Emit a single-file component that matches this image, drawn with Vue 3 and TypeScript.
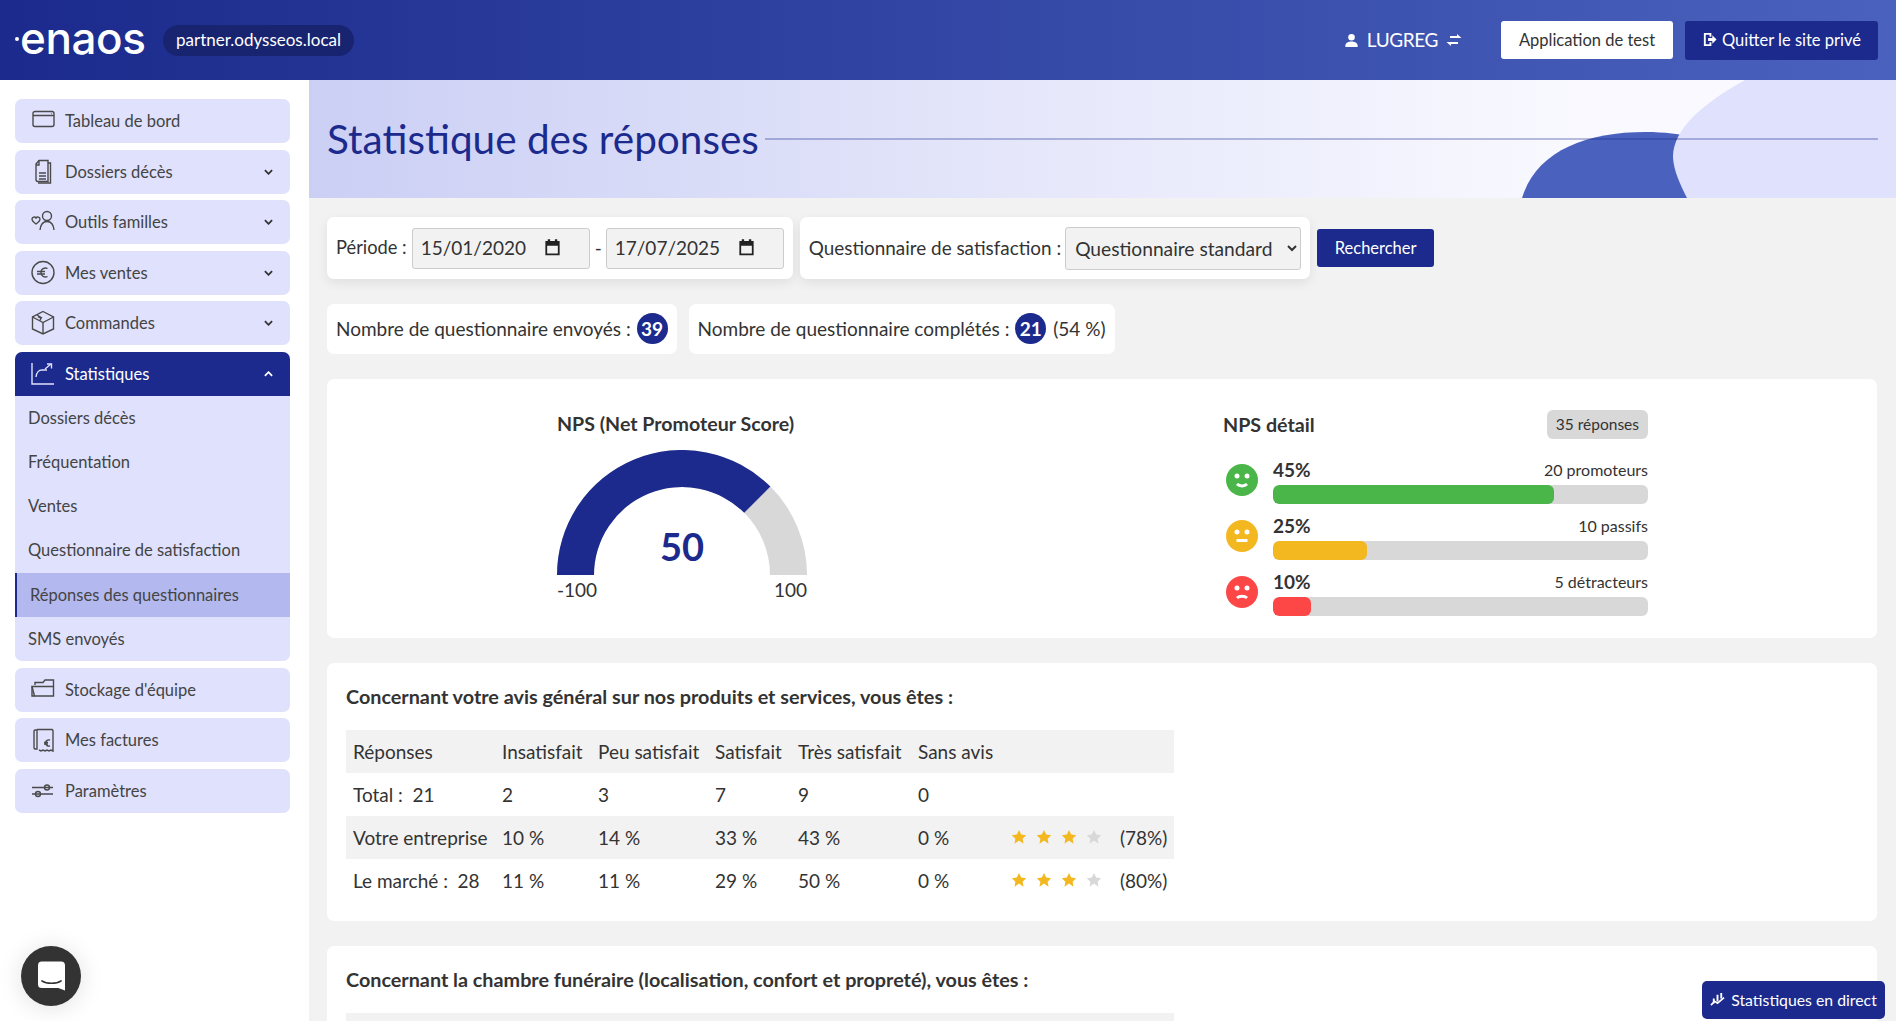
<script setup lang="ts">
interface NavItem { label: string; icon: string[]; caret?: boolean; open?: boolean; sub?: { label: string; active?: boolean }[] }

const nav: NavItem[] = [
  { label: 'Tableau de bord', icon: ['M3 5.5a2 2 0 0 1 2-2h17a2 2 0 0 1 2 2v11a2 2 0 0 1-2 2H5a2 2 0 0 1-2-2z', 'M3 7.5h21', 'M21 5.5h.5'] },
  { label: 'Dossiers décès', caret: true, icon: ['M9 1.5h9v21H8a2 2 0 0 1-2-2V5z', 'M9 1.5V6H6', 'M18 4h2.500v20H8', 'M9 14h7', 'M9 17h7', 'M9 20h7'] },
  { label: 'Outils familles', caret: true, icon: ['M6 15c-2.500-1.800-4-3-4-5a2.200 2.200 0 0 1 4-1 2.200 2.200 0 0 1 4 1c0 2-1.500 3.200-4 5z', 'M17 11.500a4.500 4.500 0 1 0 0-9 4.500 4.500 0 0 0 0 9z', 'M10 21c.6-5 3-8.500 7-8.500s6.500 3.500 7 8.500'] },
  { label: 'Mes ventes', caret: true, icon: ['M13 1.500a11 11 0 1 1 0 22 11 11 0 0 1 0-22z', 'M17.500 8.500a4.500 4.500 0 1 0 0 8', 'M7 11.500h8', 'M7 14h8'] },
  { label: 'Commandes', caret: true, icon: ['M13 1.500l10.500 5.500v12L13 24 2.500 19V7z', 'M2.500 7L13 12.500 23.500 7', 'M13 12.500V24', 'M7 5l5 3', 'M8 6.500l3 1.500-1 2.500'] },
  { label: 'Statistiques', open: true, icon: ['M2 2v21h22', 'M6 16c1-6 3-7 6-7h5', 'M15 8l6-5', 'M17 3h4.500v4.500'], sub: [
    { label: 'Dossiers décès' }, { label: 'Fréquentation' }, { label: 'Ventes' },
    { label: 'Questionnaire de satisfaction' }, { label: 'Réponses des questionnaires', active: true }, { label: 'SMS envoyés' },
  ] },
  { label: "Stockage d'équipe", icon: ['M5 8V5.500h8L15 3h8.500v16H4.500L2 9.500h21.500', 'M2 9.500V19h2.500'] },
  { label: 'Mes factures', icon: ['M5 3h2v19H5a1.500 1.500 0 0 1-1-1.500V4.500A1.500 1.500 0 0 1 5 3z', 'M7 2.500h15a1.500 1.500 0 0 1 1 1.500V24l-2-1-2 1-2-1-2 1-2-1-2 1-2-1', 'M20 13a3.500 3.500 0 0 0-4.500 3 3.500 3.500 0 0 0 4.500 3', 'M14 15.500h4', 'M14 17h4'] },
  { label: 'Paramètres', icon: ['M2 9.500h21', 'M2 16h21', 'M17 7a2.500 2.500 0 1 1 0 5 2.500 2.500 0 0 1 0-5z', 'M8 13.500a2.500 2.500 0 1 1 0 5 2.500 2.500 0 0 1 0-5z'] },
]

const details = [
  { pct: '45%', label: '20 promoteurs', width: 75, color: '#4ab548', mouth: 'M11 20c2.500 2.500 7.500 2.500 10 0' },
  { pct: '25%', label: '10 passifs', width: 25, color: '#f3b820', mouth: 'M10.500 20.500h11' },
  { pct: '10%', label: '5 détracteurs', width: 10, color: '#fd4747', mouth: 'M11 22c2.500-2.500 7.500-2.500 10 0' },
]

const headers = ['Réponses', 'Insatisfait', 'Peu satisfait', 'Satisfait', 'Très satisfait', 'Sans avis', '', '']
const rows = [
  { cells: ['Total :  21', '2', '3', '7', '9', '0'], score: '' },
  { cells: ['Votre entreprise', '10 %', '14 %', '33 %', '43 %', '0 %'], score: '(78%)' },
  { cells: ['Le marché :  28', '11 %', '11 %', '29 %', '50 %', '0 %'], score: '(80%)' },
]
const starPath = 'M8 1l2.200 4.600 5 .7-3.600 3.500.9 5L8 11.400 3.500 14.800l.9-5L.8 6.300l5-.7z'
</script>

<template>
  <div class="app">
    <header class="topbar">
      <div class="brand">
        <span class="logo">enaos</span>
        <span class="domain">partner.odysseos.local</span>
      </div>
      <div class="actions">
        <span class="user">
          <svg class="user-icon" viewBox="0 0 16 16" width="15" height="15"><circle cx="8" cy="4.500" r="3.500" fill="#fff" /><path d="M1.500 15v-2c0-2.500 3.500-4 6.500-4s6.500 1.500 6.500 4v2z" fill="#fff" /></svg>
          LUGREG
          <svg class="swap-icon" viewBox="0 0 16 12" width="16" height="12"><path d="M4 2h7V0l4.500 4H4z" fill="#fff" /><path d="M12 10H5v2L.5 8H12z" fill="#fff" /></svg>
        </span>
        <button class="btn-light">Application de test</button>
        <button class="btn-dark">
          <svg viewBox="0 0 16 16" width="15" height="15"><path d="M9 5V2H3v12h6v-3" fill="none" stroke="#fff" stroke-width="2" /><path d="M6.500 6.500H11V3.500L15.500 8 11 12.500v-3H6.500z" fill="#fff" /></svg>
          Quitter le site privé
        </button>
      </div>
    </header>

    <div class="layout">
      <aside class="sidebar">
        <div v-for="item in nav" :key="item.label" class="nav-group">
          <div class="nav-head" :class="{ open: item.open }">
            <svg class="nav-icon" viewBox="0 0 26 26" width="26" height="26">
              <path v-for="d in item.icon" :key="d" :d="d" />
            </svg>
            <span class="nav-label">{{ item.label }}</span>
            <svg v-if="item.caret || item.open" class="caret" viewBox="0 0 10 6" width="9" height="6">
              <path :d="item.open ? 'M1 5l4-4 4 4' : 'M1 1l4 4 4-4'" />
            </svg>
          </div>
          <div v-if="item.sub" class="nav-sub">
            <div v-for="s in item.sub" :key="s.label" class="sub-item" :class="{ active: s.active }">{{ s.label }}</div>
          </div>
        </div>
      </aside>

      <main class="main">
        <section class="hero">
          <svg class="hero-art" viewBox="0 0 374 118" width="374" height="118" aria-hidden="true">
            <path d="M0 118C14 72 62 52 124 52c18 0 34 2 50 6L210 118z" fill="#4a62bd" />
            <path d="M223 0C180 24 150 50 151 78c1 14 8 28 14 40H374V0z" fill="#dfe1fd" />
          </svg>
          <h1 class="title">Statistique des réponses</h1>
          <div class="title-line"></div>
        </section>

        <div class="content">
          <div class="filters">
            <div class="card filter-card">
              <span class="label period">Période :</span>
              <span class="date-field">15/01/2020
                <svg viewBox="0 0 16 16" width="19" height="19"><path d="M2 2.500h12v12H2z M3.500 6.500v6.500h9V6.500z" fill="#222" fill-rule="evenodd" /><path d="M4 1h2v3H4zM10 1h2v3h-2z" fill="#222" /></svg>
              </span>
              <span class="label dash">-</span>
              <span class="date-field">17/07/2025
                <svg viewBox="0 0 16 16" width="19" height="19"><path d="M2 2.500h12v12H2z M3.500 6.500v6.500h9V6.500z" fill="#222" fill-rule="evenodd" /><path d="M4 1h2v3H4zM10 1h2v3h-2z" fill="#222" /></svg>
              </span>
            </div>
            <div class="card filter-card survey">
              <span class="label">Questionnaire de satisfaction :</span>
              <select class="survey-select"><option>Questionnaire standard</option></select>
            </div>
            <button class="btn-search">Rechercher</button>
          </div>

          <div class="counters">
            <div class="card counter">Nombre de questionnaire envoyés : <b class="num">39</b></div>
            <div class="card counter">Nombre de questionnaire complétés : <b class="num">21</b> <span class="pct">(54 %)</span></div>
          </div>

          <section class="card nps">
            <div class="gauge">
              <h3 class="gauge-title">NPS (Net Promoteur Score)</h3>
              <svg class="gauge-svg" viewBox="0 0 250 125" width="250" height="125">
                <path d="M0 125A125 125 0 0 1 250 125H213A88 88 0 0 0 37 125z" fill="#d8d8d8" />
                <path d="M0 125A125 125 0 0 1 213.400 36.600L187.200 62.800A88 88 0 0 0 37 125z" fill="#1b2a8c" />
              </svg>
              <div class="gauge-value">50</div>
              <div class="gauge-scale"><span>-100</span><span>100</span></div>
            </div>
            <div class="detail">
              <div class="detail-head">
                <h3>NPS détail</h3>
                <span class="badge">35 réponses</span>
              </div>
              <div v-for="d in details" :key="d.pct" class="detail-row">
                <svg class="face" viewBox="0 0 32 32" width="32" height="32">
                  <circle cx="16" cy="16" r="16" :fill="d.color" />
                  <circle cx="11" cy="12" r="2.500" fill="#fff" />
                  <circle cx="21" cy="12" r="2.500" fill="#fff" />
                  <path :d="d.mouth" fill="none" stroke="#fff" stroke-width="3" />
                </svg>
                <div class="detail-body">
                  <div class="detail-text"><b>{{ d.pct }}</b><span>{{ d.label }}</span></div>
                  <div class="track"><div class="fill" :style="{ width: d.width + '%', background: d.color }"></div></div>
                </div>
              </div>
            </div>
          </section>

          <section class="card question">
            <h3 class="question-title">Concernant votre avis général sur nos produits et services, vous êtes :</h3>
            <table class="stats">
              <colgroup>
                <col class="c1" /><col class="c2" /><col class="c3" /><col class="c4" /><col class="c5" /><col class="c6" /><col class="c7" /><col class="c8" />
              </colgroup>
              <tbody>
                <tr><td v-for="(h, i) in headers" :key="i">{{ h }}</td></tr>
                <tr v-for="r in rows" :key="r.cells[0]">
                  <td v-for="c in r.cells" :key="c">{{ c }}</td>
                  <td>
                    <span v-if="r.score" class="stars">
                      <svg v-for="n in 4" :key="n" viewBox="0 0 16 16" width="16" height="16"><path :d="starPath" :fill="n < 4 ? '#f3b820' : '#d8d8d8'" /></svg>
                    </span>
                  </td>
                  <td>{{ r.score }}</td>
                </tr>
              </tbody>
            </table>
          </section>

          <section class="card question">
            <h3 class="question-title">Concernant la chambre funéraire (localisation, confort et propreté), vous êtes :</h3>
            <div class="next-head"></div>
          </section>
        </div>
      </main>
    </div>

    <div class="chat">
      <svg viewBox="0 0 28 30" width="27" height="30"><path d="M4 0h20a4 4 0 0 1 4 4v26l-7-2.500H4a4 4 0 0 1-4-4V4a4 4 0 0 1 4-4z" fill="#fff" /><path d="M4 20c5 3.500 15 3.500 20 0" fill="none" stroke="#333" stroke-width="1.600" stroke-linecap="round" /></svg>
    </div>
    <button class="live">
      <svg viewBox="0 0 16 16" width="15" height="15"><path d="M3 7h2v5H3zM7 3h2v7H7zM11 1h2v6h-2z" fill="#fff" /><path d="M1 14l4-4 3 2 7-6" fill="none" stroke="#fff" stroke-width="1.800" /></svg>
      Statistiques en direct
    </button>
  </div>
</template>

<style>
html, body { margin: 0; height: 100%; overflow: hidden; }
</style>

<style scoped>
.app { height: 1021px; overflow: hidden; font-family: Lato, "Liberation Sans", sans-serif; color: #333; background: #fff; }
button { font-family: inherit; cursor: pointer; border: 0; }
h1, h3 { margin: 0; }

.topbar { height: 80px; display: flex; align-items: center; justify-content: space-between; padding: 0 18px 0 15px; background: linear-gradient(90deg, #1b2a8c, #4a62bd); color: #fff; }
.brand { display: flex; align-items: center; gap: 19px; }
.logo { position: relative; font-family: Inter, sans-serif; font-size: 44px; line-height: 40px; font-weight: 500; letter-spacing: -.4px; width: 129px; padding-left: 5px; box-sizing: border-box; margin-top: -4px; }
.logo::before { content: ""; position: absolute; left: 0; top: 19px; width: 4px; height: 4px; border-radius: 50%; background: #fff; }
.domain { background: #182470; border-radius: 16px; height: 31px; line-height: 29px; padding: 0 13px; font-size: 17px; }
.actions { display: flex; align-items: center; }
.user { display: flex; align-items: center; gap: 8px; font-size: 19px; letter-spacing: -.4px; margin-right: 39px; line-height: 22px; }
.btn-light { width: 172px; height: 38px; background: #fff; color: #333; border-radius: 3px; font-size: 16.5px; padding-bottom: 2px; }
.btn-dark { width: 193px; height: 39px; margin-left: 12px; background: #1b2a8c; color: #fff; border-radius: 3px; font-size: 16.5px; display: flex; align-items: center; justify-content: center; gap: 5px; padding-bottom: 2px; }

.layout { display: flex; height: 941px; }
.sidebar { width: 309px; flex: none; padding: 19px 19px 0 15px; box-sizing: border-box; display: flex; flex-direction: column; gap: 6.5px; }
.nav-group { background: #dfe1fd; border-radius: 7px; overflow: hidden; flex: none; }
.nav-head { height: 44px; display: flex; align-items: center; padding: 0 17px 0 15px; gap: 9px; font-size: 16.5px; color: #444; }
.nav-head.open { background: #1b2a8c; color: #fff; }
.nav-icon { flex: none; fill: none; stroke: #4a4a4a; stroke-width: 1.400; }
.nav-head.open .nav-icon { stroke: #dfe1fd; }
.nav-label { flex: 1; }
.caret { fill: none; stroke: #333; stroke-width: 2; }
.nav-head.open .caret { stroke: #fff; }
.sub-item { height: 44.330px; line-height: 44px; padding-left: 13px; font-size: 16.5px; color: #444; }
.sub-item.active { background: #b3b9ee; border-left: 2px solid #1b2a8c; padding-left: 13px; }

.main { flex: 1; min-width: 0; background: #f2f2f2; }
.hero { position: relative; height: 118px; display: flex; align-items: center; padding: 0 18px; overflow: hidden; background: linear-gradient(90deg, #cbcff4, #f9f9ff 80%); }
.hero-art { position: absolute; right: 0; bottom: 0; }
.title { position: relative; font-size: 40.5px; font-weight: 400; color: #1b2a8c; white-space: nowrap; margin: -2px 6px 0 0; }
.title-line { position: relative; flex: 1; height: 2px; background: rgba(27, 42, 140, .3); }

.content { padding: 19px 19px 0 18px; }
.card { background: #fff; border-radius: 7px; }
.filters { display: flex; align-items: center; gap: 7px; }
.filter-card { display: flex; align-items: center; height: 62px; padding: 0 9px; box-sizing: border-box; font-size: 18.900px; box-shadow: 0 4px 12px rgba(0, 0, 0, .08); gap: 5px; }
.label { margin-bottom: 2px; }
.period { font-size: 18.300px; }
.dash { margin-right: -1px; }
.date-field { display: flex; align-items: center; justify-content: space-between; box-sizing: border-box; width: 178px; height: 41px; padding: 0 27px 2px 8px; background: #f2f2f2; border: 1px solid #ccc; border-radius: 3px; font-size: 19px; }
.survey { gap: 4px; }
.survey-select { width: 236px; height: 43px; padding: 0 5px; background: #f2f2f2; border: 1px solid #ccc; border-radius: 3px; font-family: inherit; font-size: 19.200px; color: #333; }
.btn-search { width: 117px; height: 38px; background: #1b2a8c; color: #fff; border-radius: 3px; font-size: 16.5px; padding-bottom: 2px; }

.counters { display: flex; gap: 12px; margin-top: 25px; }
.counter { height: 50px; box-sizing: border-box; display: flex; align-items: center; padding: 0 9px 2px; font-size: 19px; white-space: pre; }
.num { width: 31px; height: 31px; border-radius: 50%; background: #1b2a8c; color: #fff; display: inline-flex; align-items: center; justify-content: center; font-size: 19px; margin-left: 1px; }
.pct { margin-left: 7px; }

.nps { height: 259px; margin-top: 25px; position: relative; display: flex; }
.gauge { position: relative; width: 250px; margin-left: 230px; }
.gauge-title { font-size: 19.600px; font-weight: 700; margin-top: 34px; height: 37px; line-height: 22px; white-space: nowrap; }
.gauge-svg { display: block; }
.gauge-value { position: absolute; left: 0; right: 0; top: 144px; text-align: center; font-size: 38px; font-weight: 700; color: #1b2a8c; line-height: 46px; }
.gauge-scale { display: flex; justify-content: space-between; font-size: 19px; line-height: 24px; margin-top: 3px; }
.detail { width: 425px; margin-left: 416px; }
.detail-head { display: flex; justify-content: space-between; align-items: center; margin-top: 31px; height: 29px; margin-bottom: 25px; }
.detail-head h3 { font-size: 19.700px; font-weight: 700; }
.badge { height: 29px; line-height: 28px; padding: 0 9px; background: #d8d8d8; border-radius: 6px; font-size: 15.500px; }
.detail-row { display: flex; gap: 15px; height: 56px; margin-left: 3px; }
.face { flex: none; }
.detail-body { flex: 1; }
.detail-text { display: flex; justify-content: space-between; align-items: center; box-sizing: border-box; height: 21px; padding-bottom: 10px; font-size: 16px; }
.detail-text b { font-size: 19px; }
.track { height: 19px; background: #d8d8d8; border-radius: 6px; overflow: hidden; }
.fill { height: 100%; border-radius: 6px; }

.question { margin-top: 25px; height: 258px; padding: 19px; box-sizing: border-box; }
.question-title { font-size: 19.800px; font-weight: 700; line-height: 28px; height: 48px; white-space: nowrap; }
.stats { width: 828px; table-layout: fixed; border-collapse: collapse; font-size: 19px; }
.c1 { width: 148px; } .c2 { width: 96px; } .c3 { width: 117px; } .c4 { width: 83px; } .c5 { width: 120px; } .c6 { width: 93px; } .c7 { width: 109px; } .c8 { width: 62px; }
.stats td { height: 43px; padding: 0 0 1px 8px; white-space: pre; box-sizing: border-box; }
.stats td:first-child { padding-left: 7px; }
.stats tr:nth-child(odd) { background: #f2f2f2; }
.stars { display: flex; gap: 9px; }
.next-head { width: 828px; height: 43px; background: #f2f2f2; }

.chat { position: fixed; left: 21px; top: 946px; width: 60px; height: 60px; border-radius: 50%; background: #333; display: flex; align-items: center; justify-content: center; box-shadow: 0 2px 24px rgba(0, 0, 0, .12); }
.live { position: fixed; left: 1702px; top: 981px; width: 183px; height: 38px; background: #1b2a8c; color: #fff; border-radius: 5px; font-size: 15.800px; display: flex; align-items: center; justify-content: center; gap: 6px; padding-bottom: 2px; }
</style>
